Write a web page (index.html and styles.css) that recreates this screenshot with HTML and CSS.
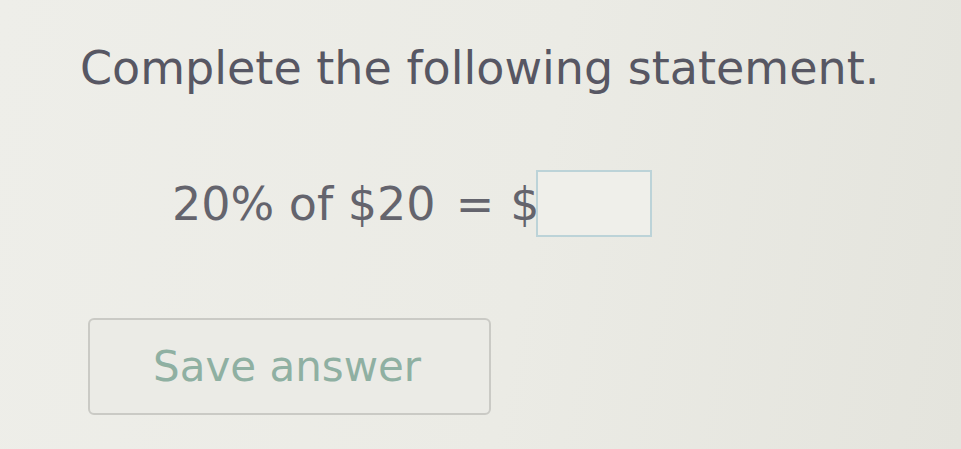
FILE: index.html
```html
<!DOCTYPE html>
<html>
<head>
<meta charset="utf-8">
<link rel="stylesheet" href="styles.css">
</head>
<body>
<div class="page">
  <h1 class="title">Complete the following statement.</h1>
  <div class="equation">
    <span class="expr">20% of $20</span>
    <span class="eq">=</span>
    <span class="dollar">$</span>
    <span class="answer"></span>
  </div>
  <button class="save">Save answer</button>
</div>
</body>
</html>
```
FILE: styles.css
```css
html, body {
  margin: 0;
  padding: 0;
}
body {
  width: 961px;
  height: 449px;
  overflow: hidden;
  background: linear-gradient(100deg, #eeeee9 0%, #ebebe5 55%, #e4e4dd 100%);
  font-family: "DejaVu Sans", Verdana, sans-serif;
  color: #5d5d68;
}
.page {
  display: flex;
  flex-direction: column;
  align-items: flex-start;
  padding: 40px 0 0 80px;
}
.title {
  margin: 0;
  font-size: 46px;
  font-weight: normal;
  line-height: 56px;
  color: #575763;
}
.equation {
  display: flex;
  align-items: center;
  margin: 74px 0 0 92px;
  font-size: 46px;
  color: #64646d;
}
.eq {
  margin: 0 16px 0 20px;
}
.dollar {
  margin-right: -3px;
}
.answer {
  width: 112px;
  height: 63px;
  border: 2px solid #bcd3d8;
  background: #efefea;
}
.save {
  margin: 81px 0 0 8px;
  width: 403px;
  height: 97px;
  border: 2px solid #cacac5;
  border-radius: 6px;
  background: #ebebe6;
  font-family: "DejaVu Sans", Verdana, sans-serif;
  font-size: 42px;
  color: #8fb0a2;
  text-align: left;
  padding: 0 0 0 63px;
}
```
